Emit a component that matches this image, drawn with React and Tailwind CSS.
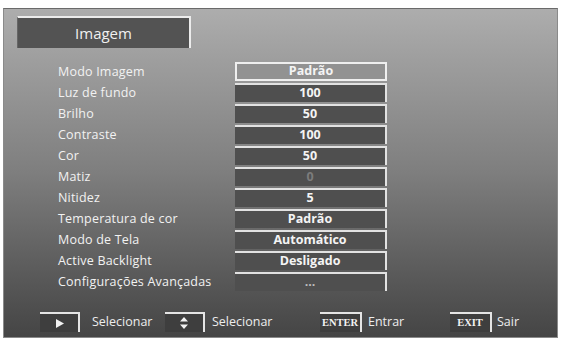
import React from "react";

const rows = [
  ["Modo Imagem", "Padrão", "sel"],
  ["Luz de fundo", "100"],
  ["Brilho", "50"],
  ["Contraste", "100"],
  ["Cor", "50"],
  ["Matiz", "0", "dim"],
  ["Nitidez", "5"],
  ["Temperatura de cor", "Padrão"],
  ["Modo de Tela", "Automático"],
  ["Active Backlight", "Desligado"],
  ["Configurações Avançadas", "...", "dots"],
];

function Key({ children, w = "w-[40px]" }) {
  return (
    <div
      className={`${w} shrink-0 h-[20px] flex items-center justify-center bg-[#3e3e3e] border-t-2 border-r-2 border-[#e4e4e4] text-[10.5px] font-bold text-[#f2f2f2] leading-none`}
    >
      {children}
    </div>
  );
}

export default function App() {
  return (
    <div
      className="w-[562px] h-[343px] bg-white pt-[8px] pl-[3px]"
      style={{ fontFamily: '"Open Sans", "Noto Sans", sans-serif' }}
    >
      <div className="w-[555px] h-[330px] border border-[#8a8a8a] border-t-[#6a6a6a] bg-gradient-to-b from-[#adadad] via-[#7e7e7e] to-[#454545] flex flex-col">
        <div className="pl-[13px] pt-[7px]">
          <div className="w-[174px] h-[32px] bg-[#535353] border-t-2 border-r-2 border-[#ececec] border-l border-l-[#666] flex items-center justify-center text-[15px] text-[#f0f0f0]">
            Imagem
          </div>
        </div>
        <div className="mt-[13px] flex flex-col">
          {rows.map(([label, value, kind]) => (
            <div key={label} className="h-[21px] flex items-center">
              <div className="w-[231px] pl-[54px] pt-[2px] text-[12.5px] tracking-[0.2px] text-[#f2f2f2] leading-none whitespace-nowrap">
                {label}
              </div>
              <div
                className={
                  kind === "sel"
                    ? "w-[152px] h-[19px] flex items-center justify-center bg-[#929292] border-2 border-[#efefef] text-[12.5px] font-bold text-[#f4f4f4] leading-none"
                    : "w-[152px] h-[19px] flex items-center justify-center bg-[#4f4f4f] border-t-2 border-r-2 border-[#e2e2e2] text-[12.5px] font-bold leading-none " +
                      (kind === "dim" ? "text-[#7c7c7c]" : kind === "dots" ? "text-[#bdbdbd]" : "text-[#f4f4f4]")
                }
              >
                {value}
              </div>
            </div>
          ))}
        </div>
        <div className="mt-auto mb-[4px] h-[22px] flex items-center text-[12.5px] text-[#ededed] whitespace-nowrap">
          <div className="ml-[36px]">
            <Key>
              <svg width="9" height="9" viewBox="0 0 9 9">
                <path d="M1 0 L9 4.5 L1 9 Z" fill="#f2f2f2" />
              </svg>
            </Key>
          </div>
          <span className="ml-[12px] w-[73px]">Selecionar</span>
          <Key>
            <svg width="8" height="12" viewBox="0 0 8 12">
              <path d="M4 0 L8 4.5 L0 4.5 Z M0 7.5 L8 7.5 L4 12 Z" fill="#f2f2f2" />
            </svg>
          </Key>
          <span className="ml-[7px] w-[108px]">Selecionar</span>
          <Key w="w-[42px]">
            <span style={{ fontFamily: '"Liberation Serif", serif' }}>ENTER</span>
          </Key>
          <span className="ml-[6px] w-[82px]">Entrar</span>
          <Key w="w-[42px]">
            <span style={{ fontFamily: '"Liberation Serif", serif' }}>EXIT</span>
          </Key>
          <span className="ml-[5px]">Sair</span>
        </div>
      </div>
    </div>
  );
}
